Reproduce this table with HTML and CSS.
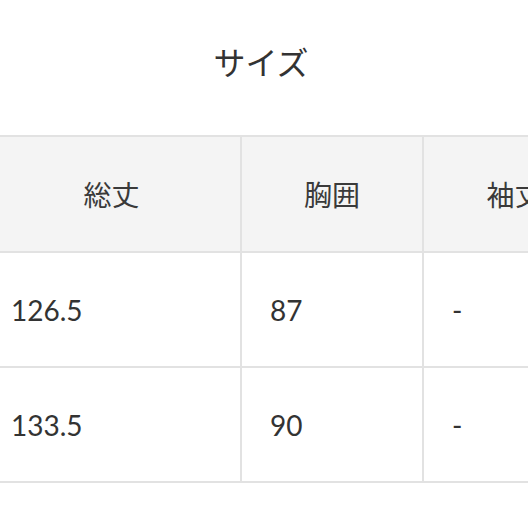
FILE: index.html
```html
<!DOCTYPE html>
<html lang="ja">
<head>
<meta charset="utf-8">
<link rel="stylesheet" href="styles.css">
</head>
<body>
<div class="page">
  <h1 class="title">サイズ</h1>
  <div class="table-wrap">
    <table class="size-table">
      <colgroup>
        <col class="c1"><col class="c2"><col class="c3">
      </colgroup>
      <thead>
        <tr><th>総丈</th><th>胸囲</th><th>袖丈</th></tr>
      </thead>
      <tbody>
        <tr><td>126.5</td><td>87</td><td>-</td></tr>
        <tr><td>133.5</td><td>90</td><td>-</td></tr>
      </tbody>
    </table>
  </div>
</div>
</body>
</html>
```
FILE: styles.css
```css
html, body {
  margin: 0;
  padding: 0;
  background: #fff;
  overflow: hidden;
}
body {
  font-family: Lato, "Noto Sans CJK JP", sans-serif;
  color: #333;
}
.page {
  width: 528px;
  height: 528px;
  overflow: hidden;
}
.title {
  margin: 0;
  height: 135px;
  box-sizing: border-box;
  padding-top: 42px;
  text-align: center;
  font-size: 32px;
  font-weight: 400;
  line-height: 42px;
  color: #333;
  padding-right: 6px;
}
.table-wrap {
  width: 528px;
  overflow: hidden;
}
.size-table {
  margin-left: -19px;
  border-collapse: collapse;
  table-layout: fixed;
  width: 624px;
}
.c1 { width: 259px; }
.c2 { width: 182px; }
.c3 { width: 183px; }
.size-table th,
.size-table td {
  border: 2px solid #e2e2e2;
  height: 115px;
  box-sizing: border-box;
  padding: 0 0 0 28px;
  vertical-align: middle;
}
.size-table th {
  background: #f4f4f4;
  font-weight: 400;
  font-size: 28px;
  color: #3a3a3a;
  text-align: center;
  padding: 0;
  height: 116px;
}
.size-table td {
  font-size: 28px;
  text-align: left;
  color: #333;
}
```
